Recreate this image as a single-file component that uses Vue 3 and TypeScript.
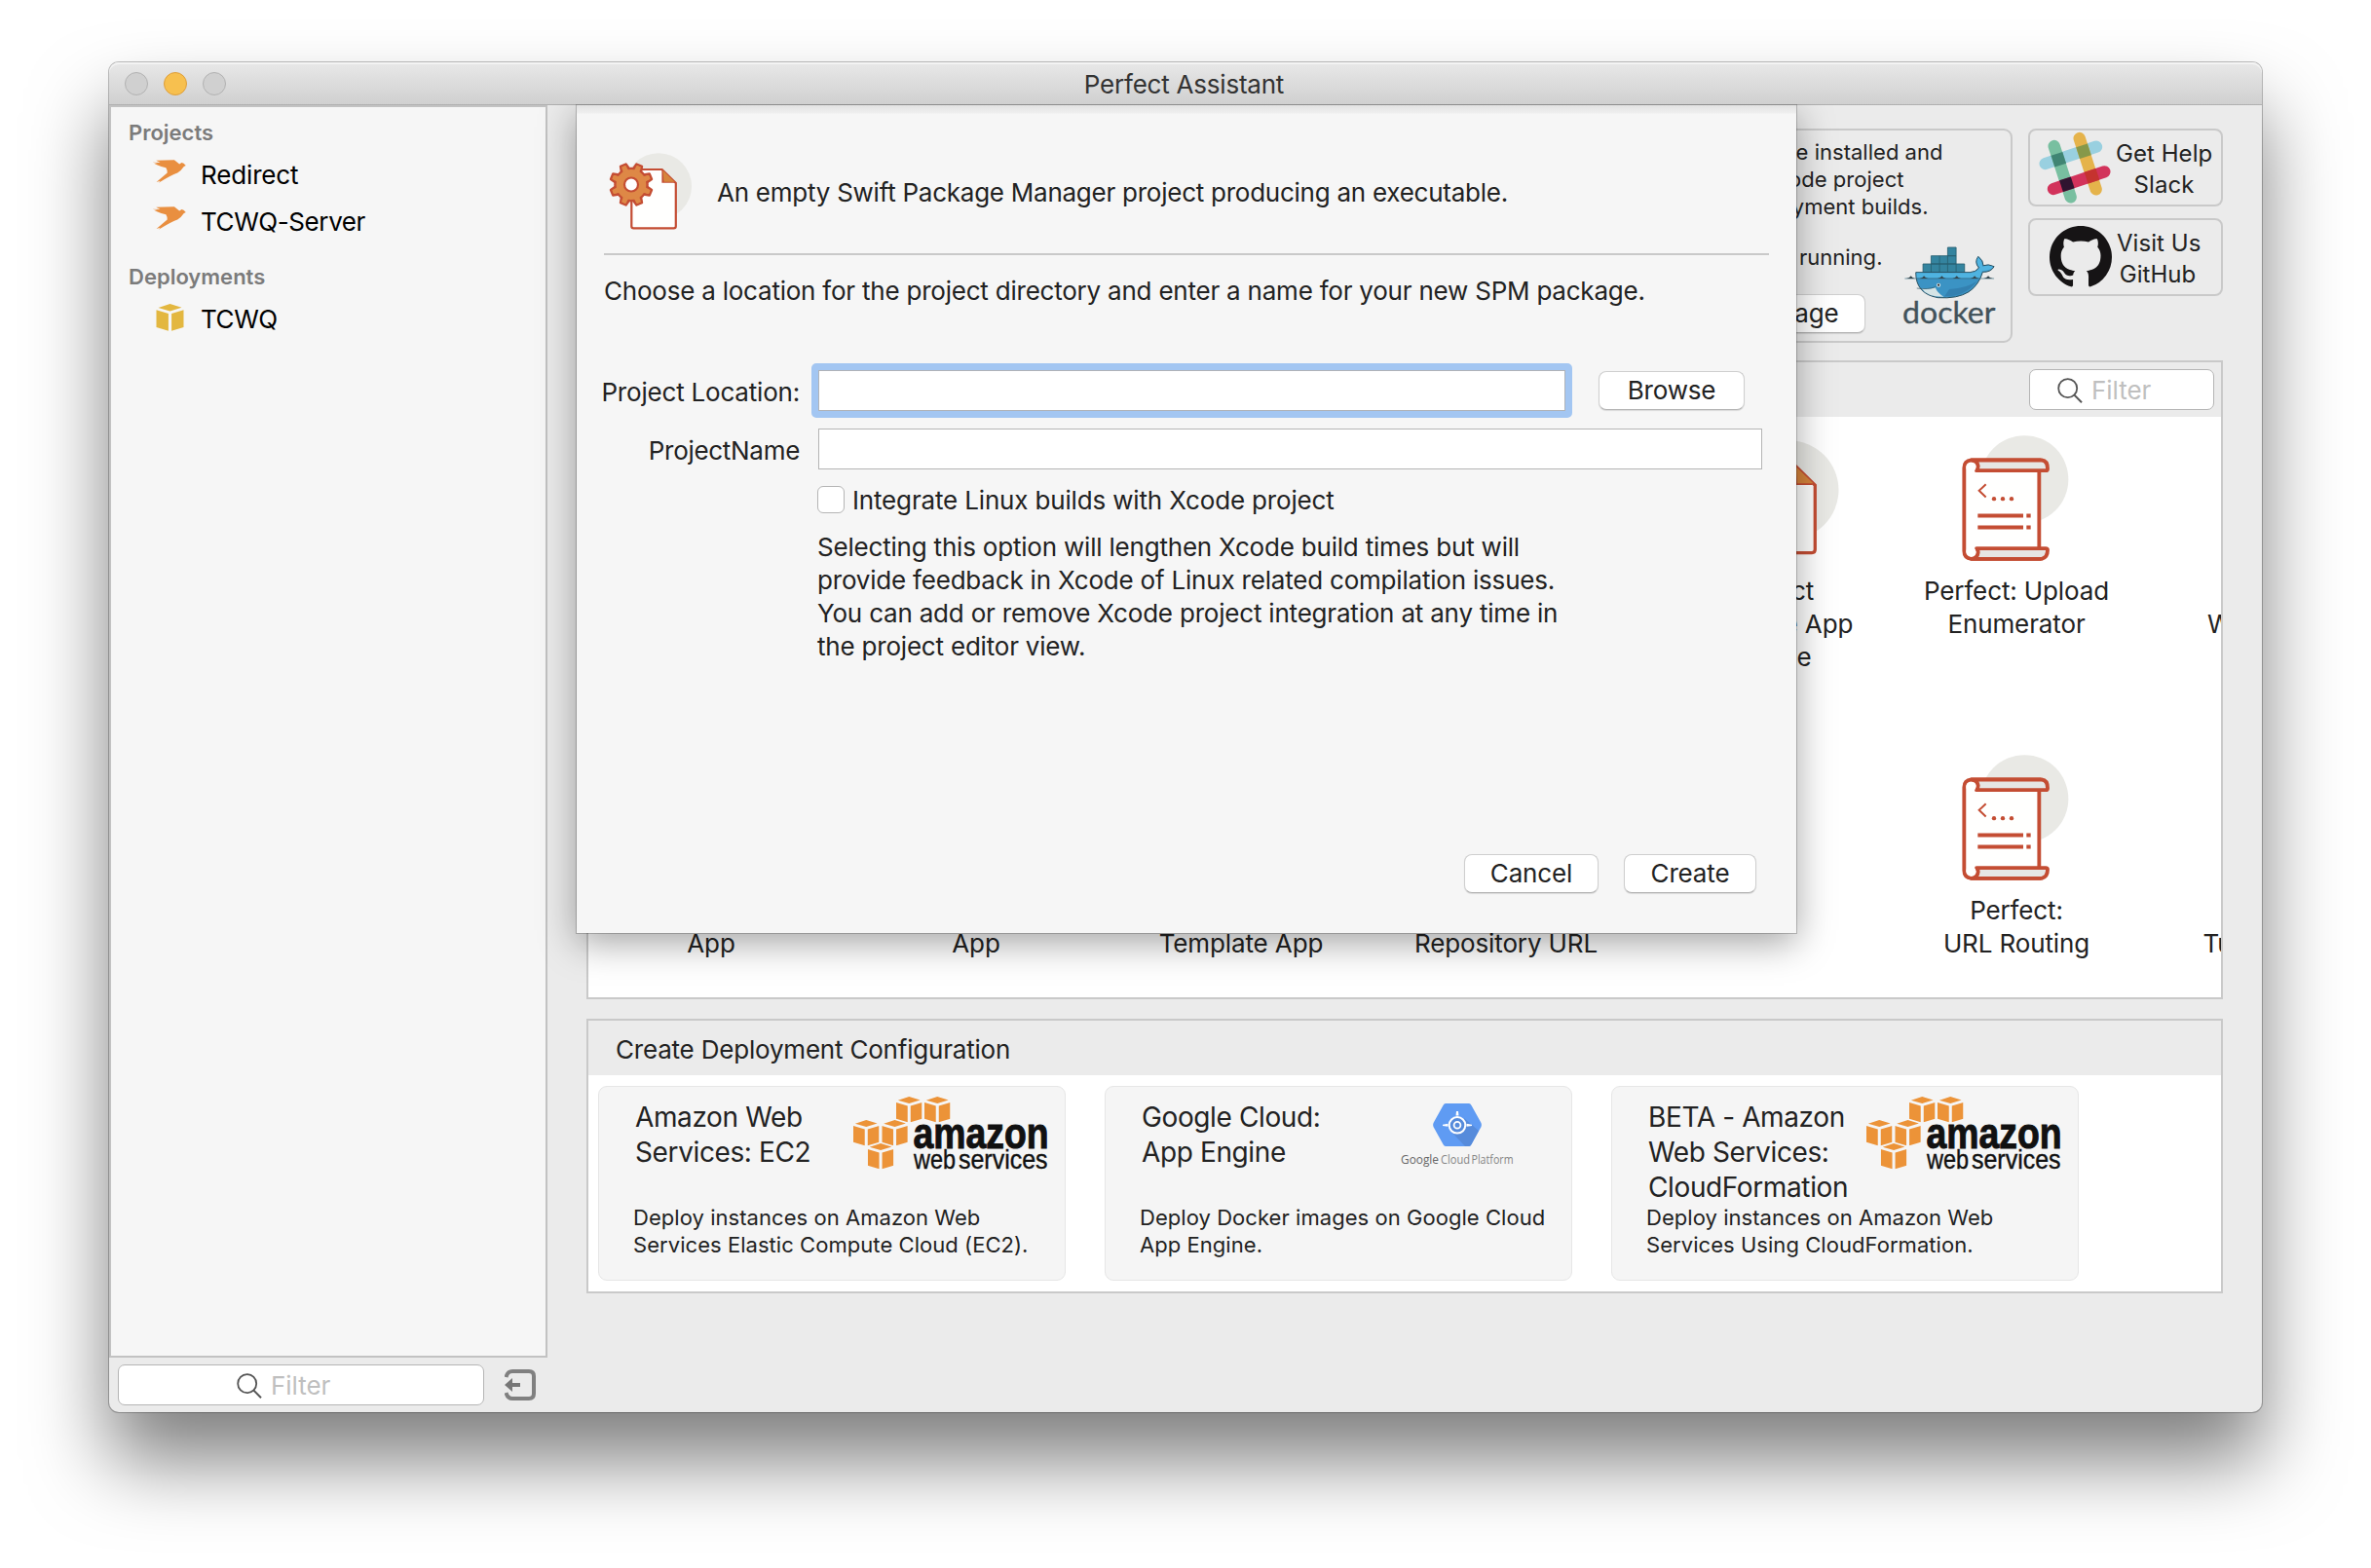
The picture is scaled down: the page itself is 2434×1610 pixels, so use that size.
<script setup lang="ts">
interface Template {
  lines: string[]
  icon: 'doc' | 'scroll'
}

interface Deployment {
  title: string[]
  text: string[]
  logo: 'aws' | 'gcp'
}

const projects: string[] = ['Redirect', 'TCWQ-Server']
const deployments: string[] = ['TCWQ']

const sections: { key: string; items: Template[] }[] = [
  {
    key: 'general',
    items: [
      { lines: [], icon: 'doc' },
      { lines: [], icon: 'doc' },
      { lines: [], icon: 'doc' },
      { lines: [], icon: 'doc' },
      { lines: ['Perfect', 'Template App', 'Engine'], icon: 'doc' },
      { lines: ['Starter', 'App'], icon: 'doc' },
      { lines: ['Starter', 'App'], icon: 'doc' },
      { lines: ['Custom', 'Template App'], icon: 'doc' },
      { lines: ['Custom', 'Repository URL'], icon: 'doc' },
    ],
  },
  {
    key: 'examples',
    items: [
      { lines: ['Perfect: Upload', 'Enumerator'], icon: 'scroll' },
      { lines: ['Perfect:', 'WebSockets'], icon: 'scroll' },
      { lines: ['Perfect:', 'URL Routing'], icon: 'scroll' },
      { lines: ['Perfect:', 'Turnstile DBs'], icon: 'scroll' },
    ],
  },
]

const configs: Deployment[] = [
  {
    title: ['Amazon Web', 'Services: EC2'],
    text: ['Deploy instances on Amazon Web', 'Services Elastic Compute Cloud (EC2).'],
    logo: 'aws',
  },
  {
    title: ['Google Cloud:', 'App Engine'],
    text: ['Deploy Docker images on Google Cloud', 'App Engine.'],
    logo: 'gcp',
  },
  {
    title: ['BETA - Amazon', 'Web Services:', 'CloudFormation'],
    text: ['Deploy instances on Amazon Web', 'Services Using CloudFormation.'],
    logo: 'aws',
  },
]

const help: string[] = [
  'Selecting this option will lengthen Xcode build times but will',
  'provide feedback in Xcode of Linux related compilation issues.',
  'You can add or remove Xcode project integration at any time in',
  'the project editor view.',
]

const cubes: [number, number][] = [
  [44, 0],
  [73, 0],
  [0, 24],
  [29.3, 24],
  [14.8, 48],
]

const teeth: number[] = [22.5, 67.5, 112.5, 157.5, 202.5, 247.5, 292.5, 337.5]
</script>

<template>
  <div class="desktop">
    <svg class="defs" width="0" height="0">
      <symbol id="bird" viewBox="200 371 106 73">
        <path fill="#e98f40" d="M200 379L224 380L211 373L268 372L284 385L291 380Q297 380 304 389L298 392Q290 404 278 412Q262 417 219 443L224 437L212 441L246 412Q247 404 242 396Q226 393 206 384L216 383Z" />
      </symbol>
      <symbol id="cube" viewBox="0 0 28 28">
        <path d="M14 0L26 3.8L14 7.4L2 4ZM0 6.3L12.4 10V27.8L0 24ZM28 6.3L15.6 10V27.8L28 24Z" />
      </symbol>
      <symbol id="lens" viewBox="0 0 26 26">
        <circle cx="10.7" cy="10.7" r="9.5" fill="none" stroke="#555" stroke-width="1.8" />
        <path d="M17.2 17.4L25 25.2" stroke="#555" stroke-width="2" />
      </symbol>
      <symbol id="doc" viewBox="0 0 87 79">
        <circle cx="52" cy="34.2" r="34" fill="#e9e9e5" />
        <path d="M24.3 17H55.6L69.8 31V75.2Q69.8 77.4 67.6 77.4H26.5Q24.3 77.4 24.3 75.2Z" fill="#fffffe" stroke="#c44d33" stroke-width="2.2" />
        <path d="M56.5 18V29.7H68" fill="#d6843b" stroke="#c44d33" stroke-width="2.2" />
        <path d="M56.5 18L68.6 29.7H57.5Z" fill="#d6843b" />
        <g fill="#de8846" stroke="#c44d33" stroke-width="2.4" stroke-linejoin="round">
          <path v-for="t in teeth" :key="t" :transform="`rotate(${t} 24 32.5)`" d="M19.6 17L21 11H27L28.4 17" />
          <circle cx="24" cy="32.5" r="16.6" />
        </g>
        <path v-for="t in teeth" :key="'f' + t" :transform="`rotate(${t} 24 32.5)`" d="M20.9 18.5L22 12.2H26L27.1 18.5Z" fill="#de8846" />
        <circle cx="24" cy="32.5" r="7" fill="#fff" stroke="#c44d33" stroke-width="2.2" />
      </symbol>
      <symbol id="scroll" viewBox="558 80 384 386">
        <circle cx="775" cy="215" r="135" fill="#e9e9e5" />
        <path d="M611 156H820V460H611Q589 458 589 436V180Q589 158 611 156Z" fill="#fffffe" stroke="#c44d33" stroke-width="11.500" />
        <path d="M611 156H828Q846 158 846 182Q846 188 840 188H627Q632 182 632 174Q630 158 611 156Z" fill="#e6e6e4" stroke="#c44d33" stroke-width="11.500" stroke-linejoin="round" />
        <path d="M611 460H828Q846 456 846 433Q846 428 840 428H627Q632 434 632 440Q630 458 611 460Z" fill="#e6e6e4" stroke="#c44d33" stroke-width="11.500" stroke-linejoin="round" />
        <circle cx="610" cy="178" r="15" fill="#fffffe" />
        <circle cx="610" cy="438" r="15" fill="#fffffe" />
        <path d="M656 230L635 250L656 270" fill="none" stroke="#c44d33" stroke-width="6" />
        <g fill="#c44d33">
          <circle cx="681" cy="275" r="6.5" />
          <circle cx="708" cy="275" r="6.5" />
          <circle cx="735" cy="275" r="6.5" />
          <path d="M631 321H771V333H631ZM781 321H794V333H781ZM631 357H771V369H631ZM781 357H794V369H781Z" />
        </g>
      </symbol>
    </svg>

    <div class="window">
      <header class="titlebar">
        <i class="light"></i><i class="light amber"></i><i class="light"></i>
        <h1>Perfect Assistant</h1>
      </header>

      <div class="body">
        <aside class="side">
          <nav class="list">
            <h2>Projects</h2>
            <a v-for="p in projects" :key="p"><svg class="bird"><use href="#bird" /></svg>{{ p }}</a>
            <h2 class="second">Deployments</h2>
            <a v-for="d in deployments" :key="d"><svg class="pkg"><use href="#cube" /></svg>{{ d }}</a>
          </nav>
          <div class="footer">
            <div class="search wide"><svg><use href="#lens" /></svg><span>Filter</span></div>
            <svg class="collapse" viewBox="0 0 32 32">
              <path d="M1.500 8Q3 2 8 2H25Q30 2 30 7V25Q30 30 25 30H8Q3 30 1.500 24" fill="none" stroke="#808080" stroke-width="4" />
              <path d="M0 16L8 9V14H16V18H8V23Z" fill="#777" />
            </svg>
          </div>
        </aside>

        <main>
          <div class="top">
            <section class="docker">
              <div class="notes">
                <p class="n1">be installed and</p>
                <p class="n2">Xcode project</p>
                <p class="n3">deployment builds.</p>
                <p class="n4">is running.</p>
                <button class="manage">Manage</button>
              </div>
              <svg class="whale" viewBox="402 428 280 240">
                <g fill="#34849f" stroke="#275f70" stroke-width="2.5">
                  <path d="M459 482H587V508H459ZM484 457H561V482H484ZM535 431H561V457H535Z" />
                  <path d="M484 482V508M510 457V508M535 457V508M561 482V508" fill="none" />
                </g>
                <path d="M437 508H603Q622 507 631 494Q616 477 629 459Q645 471 645 487Q661 481 678 490Q668 508 643 507Q631 547 600 568Q565 590 505 586Q436 574 437 508Z" fill="#3b93c4" stroke="#29505f" stroke-width="3" />
                <path d="M439 510H605Q625 508 634 494Q620 478 629 462Q642 473 642 490Q661 484 675 491Q665 504 641 504L634 525H440Z" fill="#4fb3e0" />
                <path d="M525 582Q590 583 625 535Q595 556 540 560Z" fill="#3380b0" />
                <path d="M454 557Q475 561 497 555Q503 572 523 583Q472 584 454 557Z" fill="#d5e4e6" />
                <path d="M440 557Q475 562 497 553" fill="none" stroke="#29505f" stroke-width="2" />
                <circle cx="507" cy="547" r="6" fill="#e7eef0" />
                <circle cx="507" cy="547" r="3.2" fill="#222" />
                <path d="M403 527H678" stroke="#3a6e80" stroke-width="2" />
                <path d="M408 527Q418 525 422 519Q426 525 434 527ZM449 527Q458 525 462 519Q466 525 475 527ZM504 527Q513 525 517 519Q521 525 530 527ZM550 527Q559 525 563 519Q567 525 576 527ZM605 527Q614 525 618 519Q622 525 631 527ZM646 527Q655 525 660 519Q664 525 674 527Z" fill="#33454d" />
                <text x="396" y="664" font-size="90" textLength="286" lengthAdjust="spacingAndGlyphs" class="dk">docker</text>
              </svg>
            </section>
            <div class="links">
              <a class="link">
                <svg class="slack" viewBox="818 74 222 222">
                  <g fill="none" stroke-width="37" stroke-linecap="round">
                    <path d="M838 173L995 121" stroke="#99d0e0" />
                    <path d="M865 119L916 276" stroke="#78bfa0" />
                    <path d="M943 95L994 252" stroke="#e5b34b" />
                    <path d="M863 251L1020 198" stroke="#d2335b" />
                  </g>
                  <g>
                    <rect x="860.5" y="141.500" width="37" height="37" transform="rotate(-18 879 160)" fill="#408573" />
                    <rect x="937.5" y="116.500" width="37" height="37" transform="rotate(-18 956 135)" fill="#86984a" />
                    <rect x="886" y="218.500" width="37" height="37" transform="rotate(-18 904.5 237)" fill="#301430" />
                    <rect x="963" y="192.500" width="37" height="37" transform="rotate(-18 981.5 211)" fill="#c5332f" />
                  </g>
                </svg>
                <span>Get Help<br />Slack</span>
              </a>
              <a class="link">
                <svg class="octo" viewBox="0 0 16 16">
                  <path fill="#161415" d="M8 0C3.58 0 0 3.58 0 8c0 3.54 2.29 6.53 5.47 7.59.4.07.55-.17.55-.38 0-.19-.01-.82-.01-1.49-2.01.37-2.53-.49-2.69-.94-.09-.23-.48-.94-.82-1.13-.28-.15-.68-.52-.01-.53.63-.01 1.08.58 1.23.82.72 1.21 1.87.87 2.33.66.07-.52.28-.87.51-1.07-1.78-.2-3.64-.89-3.64-3.95 0-.87.31-1.59.82-2.15-.08-.2-.36-1.02.08-2.12 0 0 .67-.21 2.2.82.64-.18 1.32-.27 2-.27s1.36.09 2 .27c1.53-1.04 2.2-.82 2.2-.82.44 1.1.16 1.92.08 2.12.51.56.82 1.27.82 2.15 0 3.07-1.87 3.75-3.65 3.95.29.25.54.73.54 1.48 0 1.07-.01 1.93-.01 2.2 0 .21.15.46.55.38A8.01 8.01 0 0 0 16 8c0-4.42-3.58-8-8-8z" />
                </svg>
                <span>Visit Us<br />GitHub</span>
              </a>
            </div>
          </div>

          <section class="panel templates">
            <div class="bar"><div class="search"><svg><use href="#lens" /></svg><span>Filter</span></div></div>
            <div class="grids">
              <div v-for="s in sections" :key="s.key" class="grid" :class="s.key">
                <div v-for="(t, i) in s.items" :key="i" class="cell">
                  <svg :class="t.icon"><use :href="'#' + t.icon" /></svg>
                  <p v-for="(l, j) in t.lines" :key="j">{{ l }}</p>
                </div>
              </div>
            </div>
          </section>

          <section class="panel configs">
            <div class="bar"><h3>Create Deployment Configuration</h3></div>
            <div class="cards">
              <article v-for="(c, i) in configs" :key="i" class="card">
                <div class="head">
                  <h4><span v-for="l in c.title" :key="l">{{ l }}</span></h4>
                  <svg v-if="c.logo === 'aws'" class="aws" viewBox="0 0 200 76">
                    <g fill="#ec9338">
                      <use v-for="(q, k) in cubes" :key="k" href="#cube" :x="q[0]" :y="q[1]" width="26.500" height="26.500" />
                    </g>
                    <text x="61.500" y="52.500" font-size="44" font-weight="700" textLength="139" lengthAdjust="spacingAndGlyphs" class="az">amazon</text>
                    <text x="62" y="73.500" font-size="27.500" textLength="43" lengthAdjust="spacingAndGlyphs" class="ws">web</text>
                    <text x="108" y="73.500" font-size="27.500" textLength="91.500" lengthAdjust="spacingAndGlyphs" class="ws">services</text>
                  </svg>
                  <svg v-else class="gcp" viewBox="0 0 116 70">
                    <path d="M46 0H70Q71.500 0 72.500 2L82.500 20Q83.300 22 82.500 24L72.500 42Q71.500 44 70 44H46Q44.500 44 43.500 42L33.500 24Q32.700 22 33.500 20L43.500 2Q44.500 0 46 0Z" fill="#5f9bf3" />
                    <path d="M51 28L65 15L73 22L80 28L72.500 42Q71.500 44 70 44H66Z" fill="#568bdb" />
                    <circle cx="58" cy="22.300" r="8.300" fill="#568bdb" stroke="#fff" stroke-width="2" />
                    <circle cx="58" cy="22.300" r="3.400" fill="none" stroke="#fff" stroke-width="1.800" />
                    <path d="M56.500 12.500L57 8H59L59.500 12.500ZM48.500 20.800L43 21.700V23L48.500 23.800ZM67.500 20.800L73 21.700V23L67.500 23.800Z" fill="#fff" />
                    <text x="0" y="62" font-size="13" textLength="39" lengthAdjust="spacingAndGlyphs">Google</text>
                    <text x="41" y="62" font-size="13" textLength="30" lengthAdjust="spacingAndGlyphs" class="lt">Cloud</text>
                    <text x="72.500" y="62" font-size="13" textLength="43" lengthAdjust="spacingAndGlyphs" class="lt">Platform</text>
                  </svg>
                </div>
                <p v-for="l in c.text" :key="l">{{ l }}</p>
              </article>
            </div>
          </section>
        </main>
      </div>

      <div class="sheet">
        <div class="intro">
          <svg class="kind"><use href="#doc" /></svg>
          <p>An empty Swift Package Manager project producing an executable.</p>
        </div>
        <p class="choose">Choose a location for the project directory and enter a name for your new SPM package.</p>
        <div class="row">
          <label>Project Location:</label>
          <div class="field focus"></div>
          <button class="browse">Browse</button>
        </div>
        <div class="row name">
          <label>ProjectName</label>
          <div class="field"></div>
        </div>
        <div class="check"><i></i><span>Integrate Linux builds with Xcode project</span></div>
        <div class="help"><p v-for="l in help" :key="l">{{ l }}</p></div>
        <div class="actions"><button class="cancel">Cancel</button><button class="create">Create</button></div>
      </div>
    </div>
  </div>
</template>

<style>
body {
  margin: 0;
  background: #fff;
}
</style>

<style scoped>
* {
  box-sizing: border-box;
}
h1, h2, h3, h4, p {
  margin: 0;
  font-weight: 400;
}
.desktop {
  width: 2434px;
  height: 1610px;
  padding: 64px 112px 0;
  overflow: hidden;
  background: #fff;
  color: #222;
  font: 26px/34px Inter, "Liberation Sans", sans-serif;
  letter-spacing: -0.22px;
  white-space: nowrap;
}
.defs {
  position: absolute;
}
svg {
  display: block;
  flex: none;
}
svg text {
  letter-spacing: 0;
}
.window {
  position: relative;
  width: 2210px;
  height: 1386px;
  border-radius: 10px;
  background: #ebebeb;
  box-shadow: 0 0 0 1px rgba(0, 0, 0, 0.25), 0 50px 80px rgba(0, 0, 0, 0.5);
}
.titlebar {
  height: 44px;
  display: flex;
  align-items: center;
  gap: 16px;
  padding-left: 16px;
  border-radius: 10px 10px 0 0;
  border-bottom: 1px solid #b0b0b0;
  background: linear-gradient(#e8e8e8, #d0d0d0);
  box-shadow: inset 0 2px 0 #f3f3f3;
}
.light {
  width: 24px;
  height: 24px;
  border-radius: 50%;
  border: 1.5px solid #b2b2b2;
  background: #d0d0d0;
}
.light.amber {
  border-color: #de9f3c;
  background: #f7c04f;
}
h1 {
  flex: 1;
  padding: 2px 139px 0 0;
  text-align: center;
  font-size: 26px;
  color: #333;
}
.body {
  display: flex;
  height: 1342px;
}
.side {
  width: 450px;
  flex: none;
}
.list {
  height: 1286px;
  padding: 9px 0 0 18px;
  border: 2px solid #c2c2c2;
  background: #f6f6f6;
  color: #000;
  letter-spacing: -0.42px;
}
h2 {
  height: 34px;
  margin-bottom: 2px;
  font-size: 22px;
  font-weight: 600;
  letter-spacing: 0;
  color: #7b7b7b;
}
h2.second {
  margin-top: 16px;
}
.list a {
  display: flex;
  height: 48px;
  line-height: 50px;
}
.list a:nth-of-type(1) {
  letter-spacing: -0.15px;
}
.bird {
  width: 36px;
  height: 24px;
  margin: 9px 14px 0 24px;
}
.pkg {
  width: 29px;
  height: 28px;
  margin: 9px 17px 0 28px;
  fill: #e3b740;
}
.footer {
  display: flex;
  padding: 7px 0 0 9px;
}
.search {
  width: 190px;
  height: 42px;
  display: flex;
  border: 1px solid #b5b5b5;
  border-radius: 7px;
  background: #fff;
  color: #bfbfbf;
  line-height: 42px;
  letter-spacing: -0.05px;
  padding-left: 28px;
}
.search svg {
  width: 26px;
  height: 26px;
  margin: 8px 9px 0 0;
}
.search.wide {
  width: 376px;
  padding-left: 121px;
}
.collapse {
  width: 32px;
  height: 32px;
  margin: 5px 0 0 21px;
}
main {
  flex: 1;
  min-width: 0;
  padding: 24px 40px 0;
}
.top {
  display: flex;
  height: 220px;
  gap: 16px;
  margin-bottom: 18px;
}
.docker {
  flex: 1;
  display: flex;
  justify-content: flex-end;
  border: 2px solid #c9c9c9;
  border-radius: 9px;
}
.notes {
  width: 240px;
  padding-top: 8px;
  display: flex;
  flex-direction: column;
  align-items: flex-end;
  font-size: 22px;
  line-height: 28px;
  letter-spacing: 0.02px;
}
.n1 {
  margin-right: -40px;
}
.n3 {
  margin-right: -25px;
}
.n4 {
  margin: 24px 22px 0 0;
}
.manage {
  width: 152px;
  margin: 24px 40px 0 0;
}
.whale {
  width: 93.500px;
  height: 80px;
  margin: 119px 16px 0 0;
  overflow: visible;
}
.dk {
  font-family: Lato, sans-serif;
  font-weight: 400;
  fill: #42525a;
  stroke: #42525a;
  stroke-width: 1;
}
.links {
  width: 200px;
  display: flex;
  flex-direction: column;
  gap: 12px;
}
.link {
  height: 80px;
  display: flex;
  border: 2px solid #c9c9c9;
  border-radius: 8px;
  font-size: 24px;
  line-height: 32px;
  letter-spacing: 0.05px;
  text-align: center;
}
.link span {
  width: 99px;
  padding-top: 8px;
}
.link:last-child span {
  width: 84px;
}
.slack {
  width: 74px;
  height: 74px;
  margin: 1px 5px 0 9px;
}
.octo {
  width: 64px;
  height: 64px;
  margin: 6px 5px 0 20px;
}
.panel {
  border: 2px solid #c9c9c9;
  background: #fff;
  overflow: hidden;
}
.templates {
  height: 656px;
  margin-bottom: 20px;
}
.bar {
  height: 56px;
  background: #ebebeb;
}
.templates .bar {
  display: flex;
  justify-content: flex-end;
  padding: 7px 7px 0 0;
}
.grids {
  display: flex;
  margin-left: -10px;
}
.grid {
  flex: none;
  display: grid;
  grid-auto-rows: 328px;
  padding-top: 19px;
}
.general {
  grid-template-columns: repeat(5, 272px);
  margin-right: -20px;
}
.examples {
  grid-template-columns: repeat(2, 272px);
}
.cell {
  text-align: center;
  letter-spacing: -0.12px;
}
.cell svg {
  margin: 0 auto 14px;
}
.cell .scroll {
  width: 128px;
  height: 129px;
}
.cell .doc {
  width: 130px;
  height: 118px;
  margin: 5px 65px 20px 77px;
}
.configs {
  height: 282px;
}
h3 {
  padding: 13px 0 0 28px;
  font-size: 26px;
  letter-spacing: -0.2px;
}
.cards {
  display: flex;
  gap: 40px;
  padding: 11px 10px;
}
.card {
  width: 480px;
  height: 200px;
  padding: 12px 0 0 35px;
  border: 1px solid #e6e6e6;
  border-radius: 9px;
  background: #f5f5f5;
  font-size: 22px;
  line-height: 28px;
  letter-spacing: 0.05px;
}
.head {
  height: 108px;
  display: flex;
  justify-content: space-between;
  padding: 0 17px 0 2px;
}
h4 {
  padding-top: 1px;
  font-size: 28px;
  line-height: 36px;
  letter-spacing: -0.38px;
}
h4 span {
  display: block;
}
.aws {
  width: 200px;
  height: 76px;
  margin-top: -2px;
  font-family: "Liberation Sans", sans-serif;
  fill: #111;
  overflow: visible;
}
.az {
  stroke: #111;
  stroke-width: 1;
}
.ws {
  stroke: #111;
  stroke-width: 0.4;
}
.gcp {
  width: 116px;
  height: 70px;
  margin: 5px 42px 0 0;
  font-family: "Open Sans", sans-serif;
  fill: #666;
}
.lt {
  fill: #858585;
}
button {
  height: 40px;
  padding: 0;
  border: 1px solid #cfcfcf;
  border-bottom-color: #b4b4b4;
  border-radius: 8px;
  background: #fff;
  box-shadow: 0 1px 1px rgba(0, 0, 0, 0.12);
  color: #222;
  font: 26px/36px Inter, sans-serif;
  letter-spacing: -0.15px;
}
.sheet {
  position: absolute;
  left: 480px;
  top: 43px;
  width: 1252px;
  height: 851px;
  padding: 49px 28px 0;
  border-top: 1px solid #8c8c8c;
  background: linear-gradient(#e2e2e2, #efefef 8px, #f6f6f6 9px);
  box-shadow: 0 0 0 1px rgba(0, 0, 0, 0.2), 0 10px 36px rgba(0, 0, 0, 0.36);
  clip-path: inset(0 -80px -80px -80px);
}
.intro {
  height: 105px;
  display: flex;
  border-bottom: 2px solid #c9c9c9;
}
.kind {
  width: 87px;
  height: 79px;
  margin: 0 25px 0 4px;
}
.intro p {
  padding-top: 24px;
  letter-spacing: -0.25px;
}
.choose {
  margin-top: 20px;
}
.row {
  display: flex;
  height: 42px;
  margin-top: 64px;
  line-height: 42px;
}
label {
  width: 205px;
  margin: 0 19px 0 -4px;
  padding-top: 2px;
  text-align: right;
  letter-spacing: -0.2px;
}
.row.name {
  margin-top: 18px;
}
.name label {
  letter-spacing: -0.3px;
}
.field {
  width: 969px;
  height: 42px;
  border: 1px solid #b5b5b5;
  background: #fff;
}
.field.focus {
  width: 781px;
  height: 56px;
  margin: -7px;
  border: 7px solid #a3c6f2;
  border-radius: 5px;
  box-shadow: inset 0 0 0 1px #b0b3b8;
}
.field + .browse {
  width: 150px;
  margin: 1px 0 0 34px;
}
.check {
  display: flex;
  height: 34px;
  margin: 16px 0 0 219px;
  line-height: 32px;
  letter-spacing: -0.16px;
}
.check i {
  width: 28px;
  height: 28px;
  margin: 1px 8px 0 0;
  border: 1px solid #b5b5b5;
  border-radius: 6px;
  background: #fff;
}
.help {
  margin: 13px 0 0 219px;
  letter-spacing: -0.2px;
}
.actions {
  display: flex;
  gap: 26px;
  margin: 196px 0 0 883px;
}
.cancel {
  width: 138px;
}
.create {
  width: 136px;
}
</style>
